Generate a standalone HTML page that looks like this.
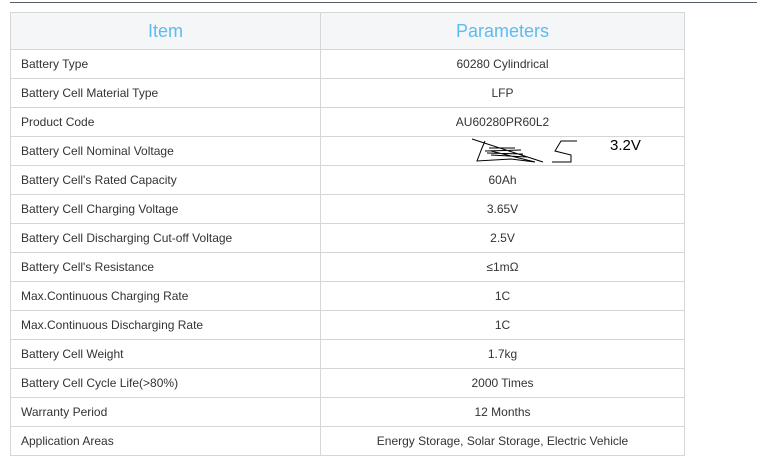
<!DOCTYPE html>
<html><head><style>
body{margin:0;background:#fff;width:757px;height:462px;overflow:hidden;font-family:"Liberation Sans",Arial,sans-serif;position:relative}
.top{position:absolute;left:10px;right:0;top:2px;height:1px;background:#555c66}
table{position:absolute;left:10px;top:12px;width:675px;border-collapse:collapse}
td,th{border:1px solid #d6d6d6;font-size:12px;color:#333;height:28px;padding:0 0 0 10px}
th{height:36px;background:#f5f6f8;color:#5bbcef;font-weight:normal;font-size:18px;padding:0;text-align:center}
td:last-child{text-align:center;padding:0}
</style></head><body>
<div class="top"></div>
<table>
<tr><th style="width:309px">Item</th><th>Parameters</th></tr>
<tr><td>Battery Type</td><td>60280 Cylindrical</td></tr>
<tr><td>Battery Cell Material Type</td><td>LFP</td></tr>
<tr><td>Product Code</td><td>AU60280PR60L2</td></tr>
<tr><td>Battery Cell Nominal Voltage</td><td style="position:relative"><svg width="200" height="30" style="position:absolute;left:150px;top:0" viewBox="0 0 200 30"><g fill="none" stroke="#000" stroke-width="1"><path d="M1 2 L72 25 M14 4 L11 11 L6 24 L40 22 L64 25 L20 14 M14 14 L50 13 M16 16 L52 17 M18 11 L44 11 M20 18 L56 20"/><path d="M106 4 L90 4 L84 14 L100 18 L100 25 L81 25"/></g><text x="139" y="13" font-size="15" fill="#000" font-family="Liberation Sans">3.2V</text></svg></td></tr>
<tr><td>Battery Cell's Rated Capacity</td><td>60Ah</td></tr>
<tr><td>Battery Cell Charging Voltage</td><td>3.65V</td></tr>
<tr><td>Battery Cell Discharging Cut-off Voltage</td><td>2.5V</td></tr>
<tr><td>Battery Cell's Resistance</td><td>≤1mΩ</td></tr>
<tr><td>Max.Continuous Charging Rate</td><td>1C</td></tr>
<tr><td>Max.Continuous Discharging Rate</td><td>1C</td></tr>
<tr><td>Battery Cell Weight</td><td>1.7kg</td></tr>
<tr><td>Battery Cell Cycle Life(&gt;80%)</td><td>2000 Times</td></tr>
<tr><td>Warranty Period</td><td>12 Months</td></tr>
<tr><td>Application Areas</td><td>Energy Storage, Solar Storage, Electric Vehicle</td></tr>
</table>
</body></html>
